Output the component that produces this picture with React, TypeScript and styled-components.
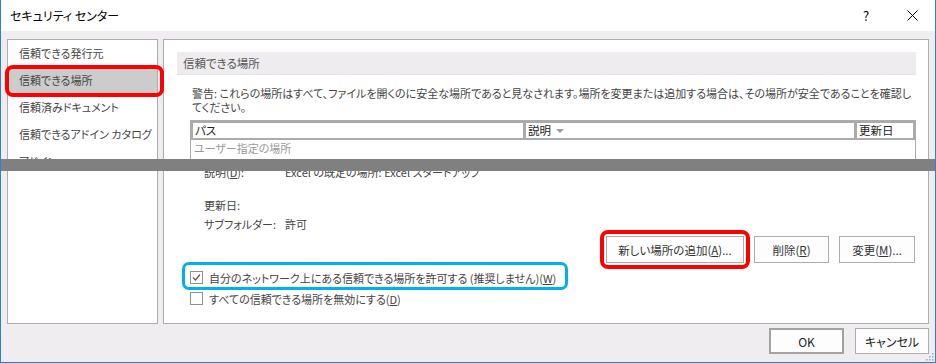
import React from 'react';
import styled, { createGlobalStyle } from 'styled-components';

const navItems = [
  '信頼できる発行元',
  '信頼できる場所',
  '信頼済みドキュメント',
  '信頼できるアドイン カタログ',
  'アドイン'
];

const GlobalStyle = createGlobalStyle`
  html, body {
    margin: 0;
    padding: 0;
    background: #fff;
  }
  body {
    font-family: "Noto Sans CJK JP", "Noto Sans", sans-serif;
    font-size: 11px;
    color: #444;
    font-feature-settings: "palt" 1;
  }
  * { box-sizing: border-box; }
`;

const Window = styled.div`
  position: relative;
  width: 936px;
  height: 363px;
  display: flex;
  flex-direction: column;
  border: 1px solid #2b7fd6;
  border-top: none;
  overflow: hidden;
`;

const TitleBar = styled.div`
  height: 31px;
  display: flex;
  align-items: center;
  background: #fff;
  padding-left: 9px;
`;

const Title = styled.span`
  font-size: 12px;
  color: #000;
`;

const Caption = styled.div`
  margin-left: auto;
  display: flex;
  height: 100%;
`;

const CaptionButton = styled.div`
  width: 46px;
  height: 100%;
  display: flex;
  align-items: center;
  justify-content: center;
  font-size: 13px;
  color: #000;
`;

const Body = styled.div`
  flex: 1;
  background: #efedef;
  padding: 8px 6px 0 6px;
  display: flex;
  flex-direction: column;
`;

const Panels = styled.div`
  display: flex;
  gap: 5px;
  height: 285px;
`;

const Nav = styled.div`
  width: 151px;
  background: #fff;
  border: 1px solid #acacac;
`;

const NavItem = styled.div<{ selected?: boolean }>`
  position: relative;
  height: 27px;
  line-height: 27px;
  padding-left: 11px;
  color: #444;
  white-space: nowrap;
  background: ${({ selected }) => (selected ? '#cccccc' : 'transparent')};
  ${({ selected }) =>
    selected &&
    `
    &::after {
      content: '';
      position: absolute;
      inset: -2px -7px -3px -3px;
      border: 4px solid #ff0000;
      border-radius: 8px;
    }
  `}
`;

const Main = styled.div`
  flex: 1;
  background: #fff;
  border: 1px solid #acacac;
  padding: 12px 12px 0 13px;
`;

const SectionHeader = styled.div`
  height: 23px;
  line-height: 23px;
  background: #efecef;
  border-bottom: 1px solid #e6e3e6;
  padding-left: 6px;
  font-size: 11.5px;
  color: #555;
`;

const Warning = styled.div`
  margin-top: 11px;
  padding: 0 4px 0 15px;
  line-height: 14px;
  color: #444;
`;

const Table = styled.div`
  margin: 6px 0 0 13px;
`;

const TableHead = styled.div`
  display: grid;
  grid-template-columns: 330px 328px 1fr;
  gap: 3px;
  background: #ababab;
  padding: 3px 3px 2px 3px;
`;

const HeadCell = styled.div`
  background: #fff;
  height: 15px;
  line-height: 15px;
  padding-left: 2px;
  font-size: 11.5px;
  color: #222;
  display: flex;
  align-items: center;
  gap: 5px;
`;

const SortArrow = styled.span`
  width: 0;
  height: 0;
  border-left: 4px solid transparent;
  border-right: 4px solid transparent;
  border-top: 4px solid #9a9a9a;
`;

const TableBody = styled.div`
  height: 22px;
  border-left: 1px solid #ababab;
  border-right: 1px solid #ababab;
`;

const Placeholder = styled.div`
  padding-left: 3px;
  line-height: 16px;
  color: #9a9a9a;
`;

const Details = styled.div`
  margin-top: 1px;
  padding-left: 27px;
  display: grid;
  grid-template-columns: 81px 1fr;
  line-height: 19px;
  color: #444;
`;

const Spacer = styled.div`
  grid-column: 1 / 3;
  height: 14px;
`;

const Key = styled.u`
  text-decoration: underline;
  text-underline-offset: 1px;
`;

const ActionRow = styled.div`
  margin: 2px 1px 0 0;
  display: flex;
  justify-content: flex-end;
  gap: 10px;
`;

const Button = styled.div<{ w: number; marked?: boolean }>`
  position: relative;
  width: ${({ w }) => w}px;
  height: 27px;
  border: 1px solid #adadad;
  background: #fdfdfd;
  display: flex;
  align-items: center;
  justify-content: center;
  color: #333;
  font-size: 11.5px;
  ${({ marked }) =>
    marked &&
    `
    &::after {
      content: '';
      position: absolute;
      inset: -7px;
      border: 4px solid #ff0000;
      border-radius: 8px;
    }
  `}
`;

const Checks = styled.div`
  margin-top: 4px;
  padding-left: 13px;
  display: flex;
  flex-direction: column;
  align-items: flex-start;
`;

const CheckRow = styled.div<{ marked?: boolean }>`
  position: relative;
  height: 21px;
  display: flex;
  align-items: center;
  gap: 6px;
  color: #444;
  ${({ marked }) =>
    marked &&
    `
    &::after {
      content: '';
      position: absolute;
      top: -5px;
      bottom: -2px;
      left: -8px;
      right: -12px;
      border: 3.5px solid #00b0f0;
      border-radius: 7px;
    }
  `}
`;

const Box = styled.span`
  width: 13px;
  height: 13px;
  border: 1px solid #909090;
  background: #fff;
  display: flex;
  align-items: center;
  justify-content: center;
`;

const Footer = styled.div`
  margin-top: 4px;
  display: flex;
  justify-content: flex-end;
  gap: 11px;
`;

const DialogButton = styled.div<{ primary?: boolean; w: number }>`
  width: ${({ w }) => w}px;
  height: 26px;
  border: ${({ primary }) => (primary ? '2px solid #a2a2a2' : '1px solid #adadad')};
  background: #fdfdfd;
  display: flex;
  align-items: center;
  justify-content: center;
  font-size: 12px;
  color: #222;
`;

const CutBar = styled.div`
  position: absolute;
  left: 0;
  right: 0;
  top: 159px;
  height: 12px;
  background: #808080;
  z-index: 10;
`;

const Grip = styled.svg`
  position: absolute;
  right: 1px;
  bottom: 1px;
`;

const Check = () => (
  <svg width="9" height="9" viewBox="0 0 9 9">
    <polyline points="1,4.5 3.5,7 8,1.5" fill="none" stroke="#5a5a5a" strokeWidth="1.2" />
  </svg>
);

const App: React.FC = () => (
  <>
    <GlobalStyle />
    <Window>
      <TitleBar>
        <Title>セキュリティ センター</Title>
        <Caption>
          <CaptionButton>?</CaptionButton>
          <CaptionButton>
            <svg width="11" height="11" viewBox="0 0 11 11">
              <path d="M0.5 0.5 L10.5 10.5 M10.5 0.5 L0.5 10.5" stroke="#000" strokeWidth="1" />
            </svg>
          </CaptionButton>
        </Caption>
      </TitleBar>
      <Body>
        <Panels>
          <Nav>
            {navItems.map((item, i) => (
              <NavItem key={item} selected={i === 1}>
                {item}
              </NavItem>
            ))}
          </Nav>
          <Main>
            <SectionHeader>信頼できる場所</SectionHeader>
            <Warning>
              警告: これらの場所はすべて、ファイルを開くのに安全な場所であると見なされます。場所を変更または追加する場合は、その場所が安全であることを確認してください。
            </Warning>
            <Table>
              <TableHead>
                <HeadCell>パス</HeadCell>
                <HeadCell>
                  説明 <SortArrow />
                </HeadCell>
                <HeadCell>更新日</HeadCell>
              </TableHead>
              <TableBody>
                <Placeholder>ユーザー指定の場所</Placeholder>
              </TableBody>
            </Table>
            <Details>
              <span>
                説明(<Key>D</Key>):
              </span>
              <span>Excel の既定の場所: Excel スタートアップ</span>
              <Spacer />
              <span>更新日:</span>
              <span />
              <span>サブフォルダー:</span>
              <span>許可</span>
            </Details>
            <ActionRow>
              <Button w={138} marked>
                新しい場所の追加(<Key>A</Key>)...
              </Button>
              <Button w={75}>
                削除(<Key>R</Key>)
              </Button>
              <Button w={76}>
                変更(<Key>M</Key>)...
              </Button>
            </ActionRow>
            <Checks>
              <CheckRow marked>
                <Box>
                  <Check />
                </Box>
                <span>
                  自分のネットワーク上にある信頼できる場所を許可する (推奨しません)(<Key>W</Key>)
                </span>
              </CheckRow>
              <CheckRow>
                <Box />
                <span>
                  すべての信頼できる場所を無効にする(<Key>D</Key>)
                </span>
              </CheckRow>
            </Checks>
          </Main>
        </Panels>
        <Footer>
          <DialogButton primary w={75}>
            OK
          </DialogButton>
          <DialogButton w={74}>キャンセル</DialogButton>
        </Footer>
      </Body>
      <CutBar />
      <Grip width="9" height="9" viewBox="0 0 9 9">
        {[
          [7, 1],
          [4, 4],
          [7, 4],
          [1, 7],
          [4, 7],
          [7, 7]
        ].map(([x, y]) => (
          <rect key={`${x}-${y}`} x={x} y={y} width="1.5" height="1.5" fill="#a8a8a8" />
        ))}
      </Grip>
    </Window>
  </>
);

export default App;
